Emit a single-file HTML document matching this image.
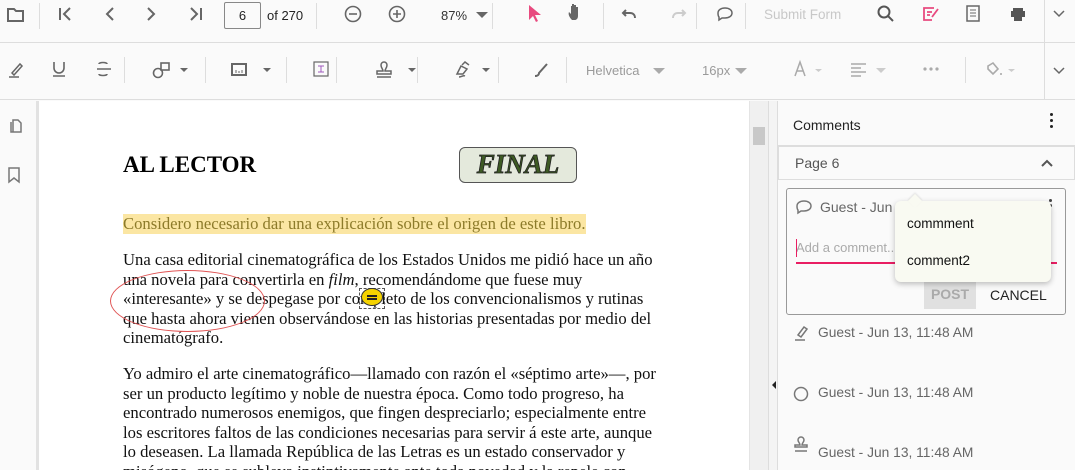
<!DOCTYPE html>
<html><head><meta charset="utf-8"><style>
*{box-sizing:border-box;margin:0;padding:0}
html,body{width:1075px;height:470px;overflow:hidden}
body{background:#fafafa;font-family:"Liberation Sans",Arial,sans-serif;position:relative;color:#333}
.a{position:absolute}
.sep{position:absolute;width:1px;background:#ddd}
.ic{position:absolute}
.pt{font-family:"Liberation Serif",serif;font-size:16.65px;color:#111;line-height:19.6px;white-space:nowrap}
.gray{color:#9a9a9a;font-size:13px}
.cm{position:absolute;left:818px;font-size:13.8px;color:#666}
</style></head><body>
<div class="a" style="left:0;top:0;width:1075px;height:43px;border-bottom:1px solid #ddd"></div>
<div class="a" style="left:0;top:43px;width:1075px;height:57px;border-bottom:1px solid #ddd"></div>
<div class="a" style="left:1044px;top:0;width:1px;height:100px;background:#ddd"></div>
<svg class="ic" style="left:0;top:0" width="1075" height="200" fill="none" stroke="#666" stroke-width="2">
<path d="M8 9h6l2 2h7v10H8z" stroke-width="2"/>
<path d="M60 8v12M70 8l-6 6 6 6"/>
<path d="M113 8l-6 6 6 6"/><path d="M148 8l6 6-6 6"/>
<path d="M191 8l6 6-6 6M201 8v12"/>
<circle cx="353" cy="14" r="7.5" stroke-width="1.6"/><path d="M349 14h8" stroke-width="1.6"/>
<circle cx="397" cy="14" r="7.5" stroke-width="1.6"/><path d="M393 14h8M397 10v8" stroke-width="1.6"/>
<path d="M476 12h12l-6 6z" fill="#666" stroke="none"/>
<path d="M529 5v15l4-4 3 6 2-1-3-6h6z" fill="#e84a7f" stroke="none"/>
<path d="M572 20c-3-3-4-6-3-8l2 2V6h1v6V4h2v8V5h2v7V7h2v9c0 3-2 4-3 4z" fill="#666" stroke="none"/>
<path d="M626 10l-3 3 3 3M623 13h7c3 0 5 2 5 5" stroke="#666"/>
<path d="M682 10l3 3-3 3M685 13h-7c-3 0-5 2-5 5" stroke="#ccc"/>
<path d="M718 13c0-3 3-5 7-5s7 2 7 5-3 5-7 5h-3l-3 2v-3c-1-1-1-2-1-4z" stroke-width="1.5"/>
<circle cx="884" cy="12" r="5.5" stroke="#555"/><path d="M888 16l5 5" stroke="#555"/>
<path d="M934 8h-10v12h8" stroke="#e84a7f" stroke-width="1.8"/><path d="M927 12h5M927 15h3M932 17l6-8" stroke="#e84a7f" stroke-width="1.8"/>
<rect x="967" y="6" width="12" height="15" stroke="#666" stroke-width="1.5"/><path d="M970 10h6M970 13h6M970 16h6" stroke="#999" stroke-width="1.5"/>
<path d="M1013 8h10v3h-10zM1011 11h14v6h-14zM1014 16h8v5h-8z" fill="#555" stroke="none"/>
<path d="M1054 11l5 5 5-5" stroke-width="1.5"/>
<path d="M1054 68l5 5 5-5" stroke-width="1.5"/>
<path d="M12 73l8-9 2 2-8 9zM9 77h10" stroke-width="1.5"/>
<path d="M54 62v6a5 5 0 0 0 10 0v-6M53 76h12" stroke-width="1.6"/>
<path d="M97 69h14M99 64c0-2 8-2 8 0M99 74c0 2 8 2 8 0" stroke-width="1.6"/>
<circle cx="158" cy="73" r="4.5" stroke-width="1.6"/><rect x="161" y="63" width="8" height="7" stroke-width="1.6"/>
<path d="M180 68h8l-4 4z" fill="#666" stroke="none"/>
<rect x="232" y="64" width="14" height="11" stroke-width="2"/><path d="M236 73v-3M239 73v-2M242 73v-3" stroke-width="1"/>
<path d="M263 68h8l-4 4z" fill="#666" stroke="none"/>
<rect x="314" y="62" width="14" height="14" stroke="#666" stroke-width="1.2"/><path d="M318 66h6M321 66v6M318 72h6" stroke="#a05abe" stroke-width="1"/>
<path d="M384 62a3 3 0 0 1 3 3c0 3-2 4-2 6h6v3h-14v-3h6c0-2-2-3-2-6a3 3 0 0 1 3-3zM377 77h14" stroke-width="1.5"/>
<path d="M408 68h8l-4 4z" fill="#666" stroke="none"/>
<path d="M457 74l4-8 6 3-4 5zM462 65l3-3 4 3M459 77c3 0 4-2 6-1" stroke-width="1.5"/>
<path d="M482 68h8l-4 4z" fill="#666" stroke="none"/>
<path d="M535 76c2 0 4-1 4-3l8-9" stroke-width="2"/>
<path d="M653 68h12l-6 6z" fill="#aaa" stroke="none"/>
<path d="M735 68h12l-6 6z" fill="#aaa" stroke="none"/>
<path d="M795 76l5-14 5 14M797 71h6" stroke="#aaa" stroke-width="1.5"/><path d="M815 69h7l-3.5 3z" fill="#ccc" stroke="none"/>
<path d="M851 64h15M851 68h10M851 72h15M851 76h10" stroke="#aaa" stroke-width="1.5"/><path d="M876 68h10l-5 5z" fill="#ccc" stroke="none"/>
<circle cx="925" cy="69" r="1.6" fill="#aaa" stroke="none"/><circle cx="931" cy="69" r="1.6" fill="#aaa" stroke="none"/><circle cx="937" cy="69" r="1.6" fill="#aaa" stroke="none"/>
<path d="M988 66l5-3 5 6-5 5-5-5zM1001 73v2" stroke="#aaa" stroke-width="1.6"/><path d="M1008 69h7l-3.5 3z" fill="#ccc" stroke="none"/>
<path d="M11 122v10h6M13 120h5l3 3v9h-8z" stroke="#777" stroke-width="1.5"/>
<path d="M9 168h10v14l-5-4-5 4z" stroke="#777" stroke-width="1.5"/>
</svg>
<div class="sep" style="left:39px;top:3px;height:26px"></div>
<div class="sep" style="left:316px;top:3px;height:26px"></div>
<div class="sep" style="left:492px;top:3px;height:26px"></div>
<div class="sep" style="left:603px;top:3px;height:26px"></div>
<div class="sep" style="left:696px;top:3px;height:26px"></div>
<div class="sep" style="left:745px;top:3px;height:26px"></div>
<div class="sep" style="left:124px;top:57px;height:26px"></div>
<div class="sep" style="left:205px;top:57px;height:26px"></div>
<div class="sep" style="left:286px;top:57px;height:26px"></div>
<div class="sep" style="left:336px;top:57px;height:26px"></div>
<div class="sep" style="left:417px;top:57px;height:26px"></div>
<div class="sep" style="left:498px;top:57px;height:26px"></div>
<div class="sep" style="left:566px;top:57px;height:26px"></div>
<div class="sep" style="left:965px;top:57px;height:26px"></div>
<div class="a" style="left:224px;top:2px;width:37px;height:27px;border:1px solid #888;border-radius:2px;font-size:13px;text-align:center;line-height:25px;color:#222">6</div>
<div class="a" style="left:267px;top:8px;font-size:13px;color:#222">of 270</div>
<div class="a" style="left:441px;top:8px;font-size:13px;color:#333">87%</div>
<div class="a" style="left:764px;top:7px;font-size:13.5px;color:#c8c8c8">Submit Form</div>
<div class="a gray" style="left:586px;top:63px">Helvetica</div>
<div class="a gray" style="left:702px;top:63px">16px</div>
<div class="a" style="left:36px;top:101px;width:3px;height:369px;background:#e2e2e2"></div>
<div class="a" style="left:39px;top:101px;width:710px;height:369px;background:#fff"></div>
<div class="a" style="left:749px;top:101px;width:19px;height:369px;background:#f0f0f0;border-left:1px solid #e4e4e4"></div>
<div class="a" style="left:753px;top:127px;width:12px;height:18px;background:#c8c8c8"></div>
<div class="a" style="left:768px;top:101px;width:10px;height:369px;background:#f4f4f4;border-left:1px solid #ddd;border-right:1px solid #ddd"></div>
<div class="a" style="left:772px;top:381px;width:0;height:0;border-top:4px solid transparent;border-bottom:4px solid transparent;border-right:4px solid #222"></div>
<div class="a" style="left:123px;top:152px;font-family:'Liberation Serif',serif;font-weight:bold;font-size:23px;color:#000">AL LECTOR</div>
<div class="a" style="left:459px;top:147px;width:118px;height:36px;border:1.5px solid #555;border-radius:6px;background:#e4e9dc;font-family:'Liberation Serif',serif;font-style:italic;font-weight:bold;font-size:27px;color:#3d5a23;text-align:center;line-height:33px;-webkit-text-stroke:.8px #222">FINAL</div>
<div class="a pt" style="left:123px;top:214px;background:#fbe6a3;color:#8d7b2a">Considero necesario dar una explicación sobre el origen de este libro.</div>
<div class="a pt" style="left:123px;top:250px">Una casa editorial cinematográfica de los Estados Unidos me pidió hace un año<br>una novela para convertirla en <i>film</i>, recomendándome que fuese muy<br>«interesante» y se despegase por completo de los convencionalismos y rutinas<br>que hasta ahora vienen observándose en las historias presentadas por medio del<br>cinematógrafo.</div>
<div class="a pt" style="left:123px;top:364px">Yo admiro el arte cinematográfico—llamado con razón el «séptimo arte»—, por<br>ser un producto legítimo y noble de nuestra época. Como todo progreso, ha<br>encontrado numerosos enemigos, que fingen despreciarlo; especialmente entre<br>los escritores faltos de las condiciones necesarias para servir á este arte, aunque<br>lo deseasen. La llamada República de las Letras es un estado conservador y<br>misógeno, que se subleva instintivamente ante toda novedad y la repele con</div>
<div class="a" style="left:110px;top:270px;width:155px;height:62px;border:1.3px solid #e05555;border-radius:50%"></div>
<div class="a" style="left:359px;top:288px;width:26px;height:21px;border:1px dashed #555"></div>
<div class="a" style="left:361px;top:288px;width:22px;height:18px;background:#f5d300;border:1.2px solid #333;border-radius:50%"></div>
<div class="a" style="left:367px;top:295px;width:10px;height:2px;background:#222;box-shadow:0 3px 0 #222"></div>
<div class="a" style="left:778px;top:101px;width:297px;height:369px;background:#fafafa"></div>
<div class="a" style="left:793px;top:117px;font-size:14px;color:#222">Comments</div>
<div class="a" style="left:1050px;top:113px;width:3px;height:3px;background:#222;border-radius:50%;box-shadow:0 6px 0 #222,0 12px 0 #222"></div>
<div class="a" style="left:778px;top:145px;width:297px;height:35px;border:1px solid #ddd;border-top:2px solid #ddd"></div>
<div class="a" style="left:795px;top:155px;font-size:14px;color:#555">Page 6</div>
<svg class="a" style="left:1040px;top:158px" width="14" height="10"><path d="M2 8l5-5 5 5" fill="none" stroke="#555" stroke-width="2"/></svg>
<div class="a" style="left:786px;top:188px;width:280px;height:127px;border:1px solid #999;border-radius:3px;background:#fafafa"></div>
<svg class="a" style="left:795px;top:199px" width="18" height="16"><path d="M2 7c0-3 3-5 7-5s7 2 7 5-3 5-7 5h-3l-3 2v-3c-1-1-1-2-1-4z" fill="none" stroke="#777" stroke-width="1.5"/></svg>
<div class="a" style="left:820px;top:199px;font-size:14px;color:#666">Guest - Jun 13</div>
<div class="a" style="left:1049px;top:199px;width:3px;height:3px;background:#444;border-radius:50%;box-shadow:0 5px 0 #444"></div>
<div class="a" style="left:796px;top:240px;font-size:13px;color:#aaa">Add a comment...</div>
<div class="a" style="left:796px;top:239px;width:1px;height:18px;background:#e91e63"></div>
<div class="a" style="left:796px;top:262px;width:261px;height:2px;background:#e91e63"></div>
<div class="a" style="left:924px;top:280px;width:52px;height:29px;background:#e0e0e0;font-size:14px;font-weight:bold;color:#aaa;text-align:center;line-height:29px">POST</div>
<div class="a" style="left:990px;top:287px;font-size:14px;color:#222">CANCEL</div>
<div class="a" style="left:895px;top:201px;width:156px;height:81px;background:#f9faf2;border-radius:6px;box-shadow:0 2px 6px rgba(0,0,0,.25)"></div>
<div class="a" style="left:910px;top:196px;width:10px;height:10px;background:#f9faf2;transform:rotate(45deg);box-shadow:-1px -1px 2px rgba(0,0,0,.1)"></div>
<div class="a" style="left:907px;top:216px;font-size:13.5px;color:#111">commment</div>
<div class="a" style="left:907px;top:253px;font-size:13.5px;color:#111">comment2</div>
<svg class="a" style="left:793px;top:323px" width="20" height="130" fill="none" stroke="#777" stroke-width="1.5">
<path d="M5 12l6-8 3 2-6 8zM2 17h10"/>
<circle cx="8" cy="71" r="6.5"/>
<path d="M8 114a3 3 0 0 1 3 3c0 2-2 3-2 5h5v2h-12v-2h5c0-2-2-3-2-5a3 3 0 0 1 3-3zM2 128h12"/>
</svg>
<div class="cm" style="top:325px">Guest - Jun 13, 11:48 AM</div>
<div class="cm" style="top:385px">Guest - Jun 13, 11:48 AM</div>
<div class="cm" style="top:445px">Guest - Jun 13, 11:48 AM</div>
</body></html>
